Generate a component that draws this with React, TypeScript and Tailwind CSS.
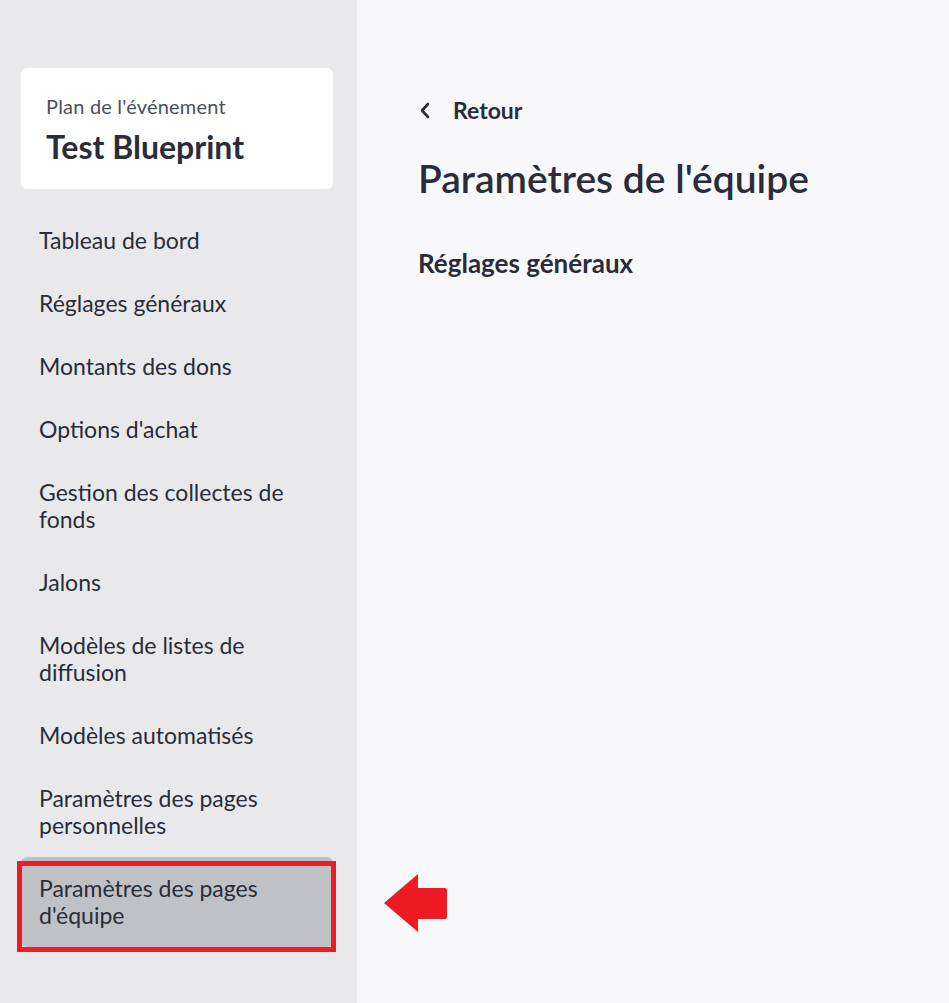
const navItems = [
  "Tableau de bord",
  "Réglages généraux",
  "Montants des dons",
  "Options d'achat",
  "Gestion des collectes de fonds",
  "Jalons",
  "Modèles de listes de diffusion",
  "Modèles automatisés",
  "Paramètres des pages personnelles",
  "Paramètres des pages d'équipe",
];

const active = "Paramètres des pages d'équipe";

export default function App() {
  return (
    <div className="flex h-[1003px] w-[949px] overflow-hidden font-['Lato',sans-serif] text-[#2a2d39]">
      <aside className="w-[357px] shrink-0 bg-[#e9e9eb] pl-[21px] pr-[24px] pt-[68px]">
        <div className="rounded-md bg-white px-[25px] pb-[23px] pt-[26px]">
          <p className="text-[20px] leading-[24px] tracking-[0.2px] text-[#4b505b]">Plan de l'événement</p>
          <h1 className="mt-[10px] text-[32px] font-bold leading-[38px]">Test Blueprint</h1>
        </div>

        <nav className="mt-[20px] flex flex-col">
          {navItems.map((item) => (
            <div key={item} className="relative">
              <a
                href="#"
                className={
                  "block rounded-md py-[18px] pl-[18px] pr-[20px] text-[23px] leading-[27px] " +
                  (item === active ? "bg-[#c0c1c5]" : "")
                }
              >
                {item}
              </a>
              {item === active && (
                <span className="pointer-events-none absolute -left-[4px] -right-[3px] bottom-[-5px] top-[4px] border-[5px] border-[#ed1c24]" />
              )}
            </div>
          ))}
        </nav>
      </aside>

      <main className="relative flex-1 bg-[#f8f8fa] pl-[61px] pt-[96px]">
        <a href="#" className="flex items-center gap-[22px] text-[23px] font-bold leading-[28px]">
          <svg width="12" height="17" viewBox="0 0 12 17" fill="none" className="ml-[1px]">
            <path d="M9 2 L3 8.5 L9 15" stroke="#2a2d39" strokeWidth="2.6" strokeLinecap="round" strokeLinejoin="round" />
          </svg>
          Retour
        </a>
        <h2 className="mt-[30px] text-[39px] font-semibold leading-[48px]">Paramètres de l'équipe</h2>
        <h3 className="mt-[46px] text-[26px] font-bold leading-[30px]">Réglages généraux</h3>

        <svg
          width="64"
          height="60"
          viewBox="0 0 64 60"
          className="absolute left-[27px] top-[873px]"
        >
          <path d="M0 30 L34 1 L34 15 L61 15 Q63 15 63 17 L63 44 Q63 46 61 46 L34 46 L34 59 Z" fill="#ed1c24" />
        </svg>
      </main>
    </div>
  );
}
